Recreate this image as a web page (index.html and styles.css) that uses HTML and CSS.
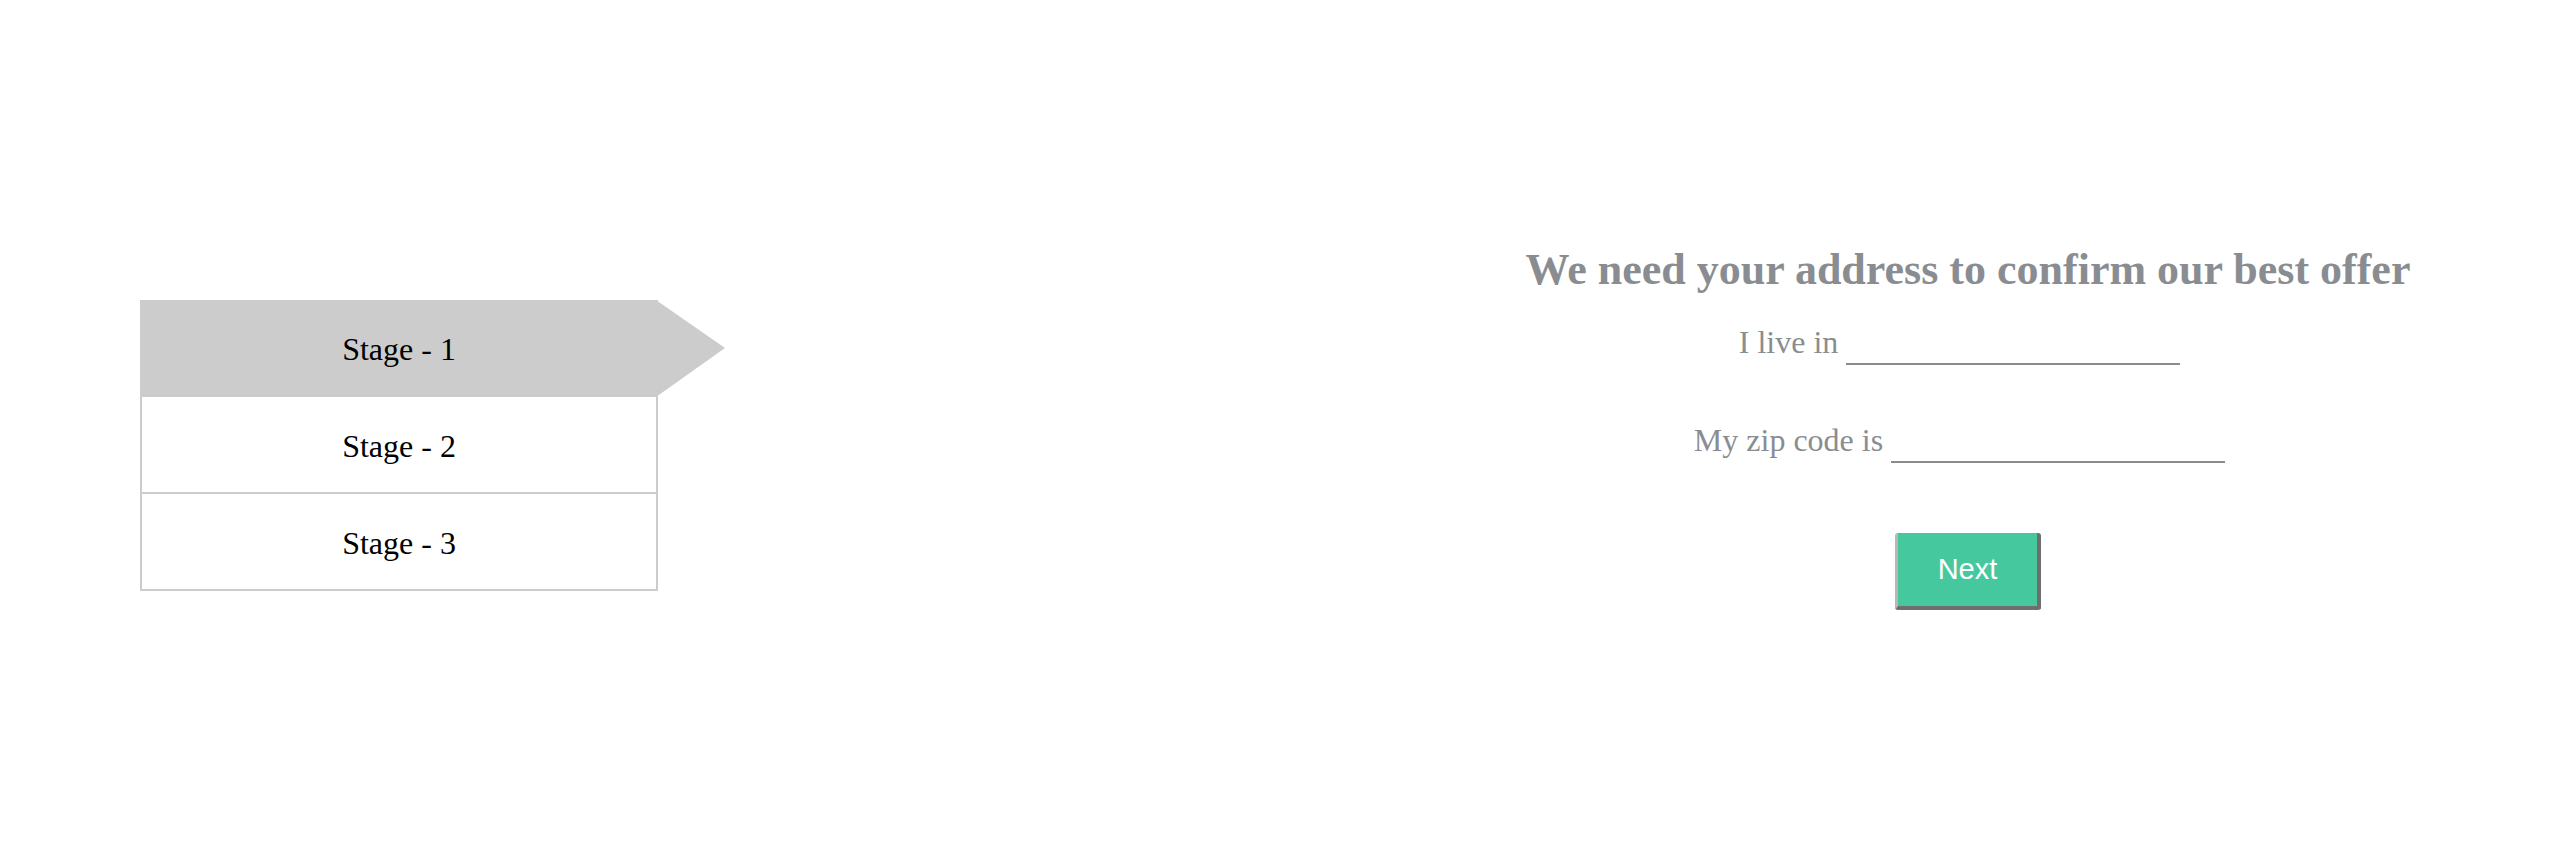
FILE: index.html
```html
<!DOCTYPE html>
<html lang="en">
<head>
<meta charset="utf-8">
<title>Address</title>
<link rel="stylesheet" href="styles.css">
</head>
<body>
<div class="page">
  <div class="left">
    <ul class="stages">
      <li class="stage active">Stage - 1</li>
      <li class="stage">Stage - 2</li>
      <li class="stage">Stage - 3</li>
    </ul>
  </div>
  <div class="right">
    <h1 class="title">We need your address to confirm our best offer</h1>
    <div class="row row-first">I live in <input class="field" type="text"></div>
    <div class="row">My zip code is <input class="field" type="text"></div>
    <div class="actions"><button class="next" type="button">Next</button></div>
  </div>
</div>
</body>
</html>
```

FILE: styles.css
```css
html, body {
  margin: 0;
  padding: 0;
  background: #ffffff;
}

body {
  font-family: "Liberation Serif", "Times New Roman", serif;
}

.page {
  display: flex;
  width: 2570px;
  height: 858px;
  overflow: hidden;
}

.left {
  width: 1366px;
  box-sizing: border-box;
  padding: 300px 0 0 140px;
}

.stages {
  list-style: none;
  margin: 0;
  padding: 0;
  width: 518px;
}

.stage {
  position: relative;
  height: 97px;
  box-sizing: border-box;
  border: 2px solid #cccccc;
  border-top: none;
  padding-top: 3px;
  display: flex;
  align-items: center;
  justify-content: center;
  font-size: 32px;
  color: #000000;
}

.stage.active {
  background: #cccccc;
}

.stage.active::after {
  content: "";
  position: absolute;
  top: 0;
  left: 100%;
  width: 0;
  height: 0;
  border-left: 69px solid #cccccc;
  border-top: 48px solid transparent;
  border-bottom: 49px solid transparent;
}

.right {
  flex: 1;
  text-align: center;
  padding-top: 245px;
  color: #898d92;
}

.title {
  margin: 0;
  font-size: 44px;
  line-height: 50px;
  font-weight: bold;
}

.row {
  font-size: 32px;
  margin-top: 57px;
  padding-right: 17px;
}

.row-first {
  margin-top: 29px;
}

.field {
  font: inherit;
  width: 334px;
  border: none;
  border-bottom: 2px solid #898d92;
  padding: 0 0 2px;
  background: transparent;
  outline: none;
  color: #898d92;
}

.actions {
  margin-top: 70px;
  display: flex;
  justify-content: center;
}

.next {
  width: 146px;
  height: 77px;
  box-sizing: border-box;
  background: #46c89f;
  color: #ffffff;
  font-family: "Liberation Sans", Arial, sans-serif;
  font-size: 29px;
  border: none;
  border-left: 3px solid #b8b8b8;
  border-right: 4px solid #6e6e6e;
  border-bottom: 4px solid #6e6e6e;
  border-radius: 3px;
  padding: 0;
}
```
